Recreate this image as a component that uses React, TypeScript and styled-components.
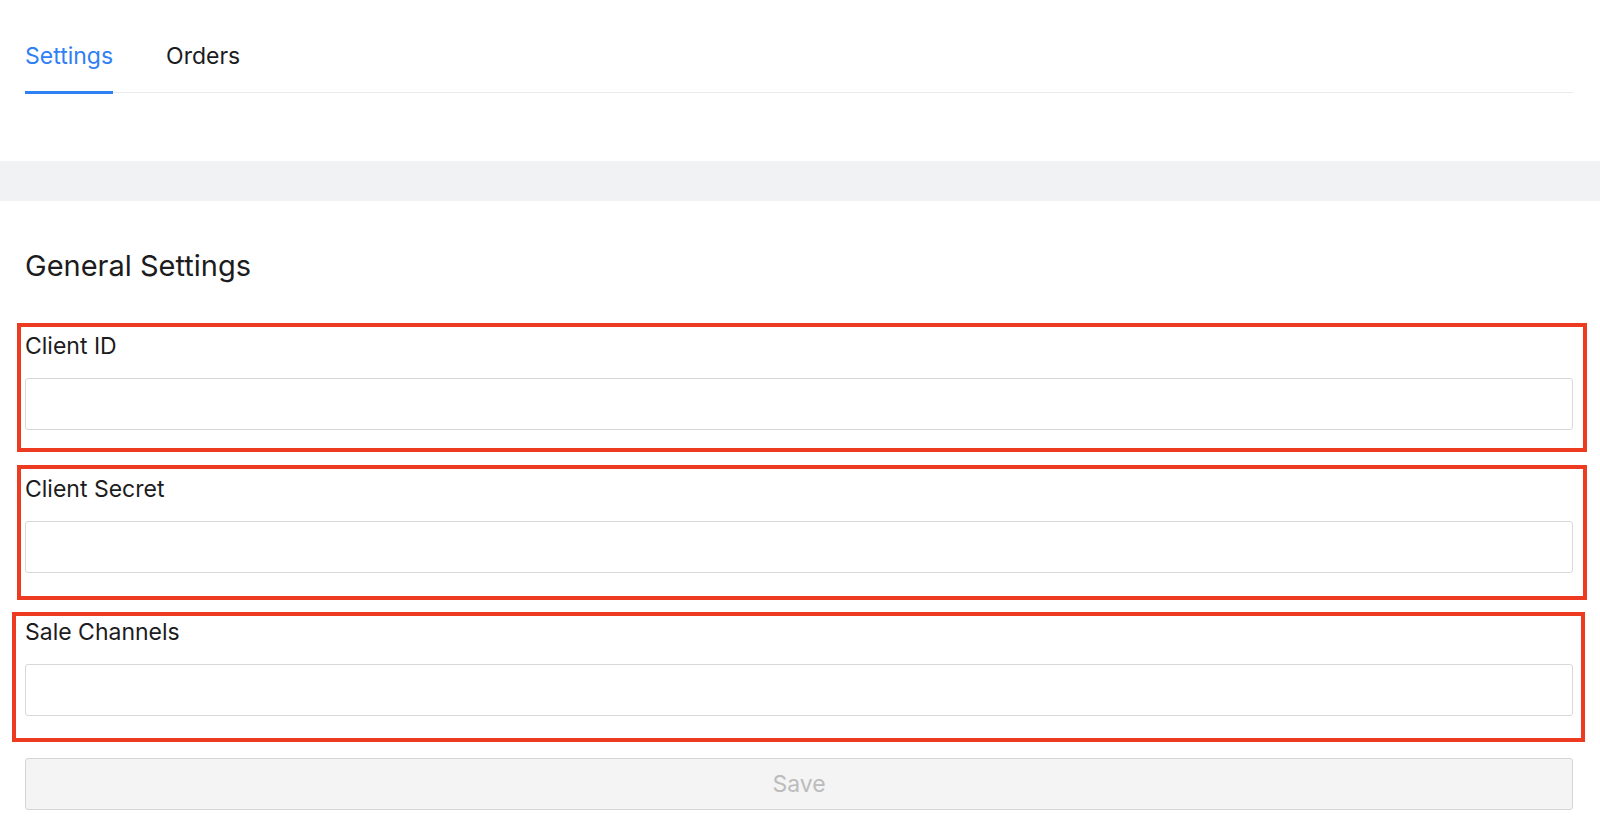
import styled, { createGlobalStyle } from 'styled-components';

const GlobalStyle = createGlobalStyle`
  * { box-sizing: border-box; }
  html, body { margin: 0; padding: 0; background: #ffffff; }
  body {
    font-family: Inter, "Liberation Sans", Arial, sans-serif;
    color: #1c1c1e;
    -webkit-font-smoothing: antialiased;
  }
`;

interface FrameOffsets {
  top: number;
  right: number;
  bottom: number;
  left: number;
}

interface Field {
  label: string;
  frame: FrameOffsets;
}

// The red frames are review annotations drawn over each field group,
// each one a little off from the group it marks.
const fields: Field[] = [
  { label: 'Client ID', frame: { top: -7, right: -14, bottom: -22, left: -8 } },
  { label: 'Client Secret', frame: { top: -8, right: -14, bottom: -27, left: -8 } },
  { label: 'Sale Channels', frame: { top: -4, right: -12, bottom: -26, left: -13 } },
];

const tabs = ['Settings', 'Orders'];

const App: React.FC = () => (
  <>
    <GlobalStyle />
    <Page>
      <TabBar>
        <TabList>
          {tabs.map((tab, i) => (
            <Tab key={tab} $active={i === 0}>
              {tab}
            </Tab>
          ))}
        </TabList>
      </TabBar>
      <Band />
      <Content>
        <Heading>General Settings</Heading>
        <Form>
          {fields.map((field) => (
            <FieldGroup key={field.label}>
              <Label>{field.label}</Label>
              <Input type="text" />
              <AnnotationFrame $offsets={field.frame} />
            </FieldGroup>
          ))}
          <SaveButton type="button" disabled>
            Save
          </SaveButton>
        </Form>
      </Content>
    </Page>
  </>
);

const Page = styled.div({
  width: '100%',
  minHeight: '836px',
  display: 'flex',
  flexDirection: 'column',
});

const TabBar = styled.div({
  padding: '40px 27px 0 25px',
});

const TabList = styled.div({
  display: 'flex',
  gap: '53px',
  borderBottom: '1px solid #ebebeb',
});

const Tab = styled.div<{ $active: boolean }>((props) => ({
  fontSize: '23px',
  lineHeight: '33px',
  paddingBottom: '18px',
  marginBottom: '-2px',
  borderBottom: props.$active ? '3px solid #2f80f5' : '3px solid transparent',
  color: props.$active ? '#2f80f5' : '#1c1c1e',
  cursor: 'pointer',
}));

const Band = styled.div({
  height: '40px',
  marginTop: '68px',
  backgroundColor: '#f1f2f4',
});

const Content = styled.div({
  padding: '48px 27px 0 25px',
});

const Heading = styled.h2({
  margin: 0,
  fontSize: '29px',
  lineHeight: '34px',
  fontWeight: 400,
  color: '#1c1c1e',
});

const Form = styled.div({
  display: 'flex',
  flexDirection: 'column',
  gap: '43px',
  marginTop: '47px',
});

const FieldGroup = styled.div({
  position: 'relative',
  display: 'flex',
  flexDirection: 'column',
  gap: '15px',
});

const Label = styled.label({
  fontSize: '23px',
  lineHeight: '33px',
  color: '#1c1c1e',
});

const Input = styled.input({
  height: '52px',
  width: '100%',
  border: '1px solid #d8d8d8',
  borderRadius: '3px',
  backgroundColor: '#ffffff',
  padding: '0 14px',
  fontSize: '20px',
  fontFamily: 'inherit',
  outline: 'none',
});

const AnnotationFrame = styled.div<{ $offsets: FrameOffsets }>(({ $offsets }) => ({
  position: 'absolute',
  top: `${$offsets.top}px`,
  right: `${$offsets.right}px`,
  bottom: `${$offsets.bottom}px`,
  left: `${$offsets.left}px`,
  border: '4px solid #ec3b21',
  pointerEvents: 'none',
}));

const SaveButton = styled.button({
  height: '52px',
  width: '100%',
  marginTop: '-1px',
  border: '1px solid #d5d5d5',
  borderRadius: '3px',
  backgroundColor: '#f4f4f4',
  color: '#bcbcbc',
  fontSize: '23px',
  fontFamily: 'inherit',
  cursor: 'not-allowed',
});

export default App;
